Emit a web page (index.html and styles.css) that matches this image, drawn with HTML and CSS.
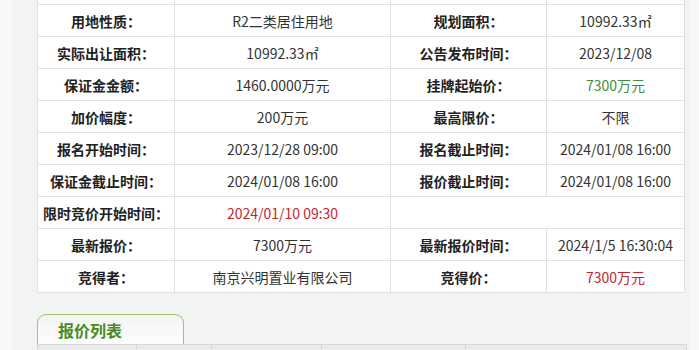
FILE: index.html
```html
<!DOCTYPE html>
<html lang="zh-CN">
<head>
<meta charset="utf-8">
<title>地块详情</title>
<link rel="stylesheet" href="styles.css">
</head>
<body>
<div class="page">
  <table class="info">
    <colgroup>
      <col class="c1"><col class="c2"><col class="c3"><col class="c4">
    </colgroup>
    <tbody>
      <tr class="cut"><th></th><td></td><th></th><td></td></tr>
      <tr><th>用地性质：</th><td>R2二类居住用地</td><th>规划面积：</th><td>10992.33㎡</td></tr>
      <tr><th>实际出让面积：</th><td>10992.33㎡</td><th>公告发布时间：</th><td>2023/12/08</td></tr>
      <tr><th>保证金金额：</th><td>1460.0000万元</td><th>挂牌起始价：</th><td class="green">7300万元</td></tr>
      <tr><th>加价幅度：</th><td>200万元</td><th>最高限价：</th><td>不限</td></tr>
      <tr><th>报名开始时间：</th><td>2023/12/28 09:00</td><th>报名截止时间：</th><td>2024/01/08 16:00</td></tr>
      <tr><th>保证金截止时间：</th><td>2024/01/08 16:00</td><th>报价截止时间：</th><td>2024/01/08 16:00</td></tr>
      <tr><th>限时竞价开始时间：</th><td class="red">2024/01/10 09:30</td><td colspan="2"></td></tr>
      <tr><th>最新报价：</th><td>7300万元</td><th>最新报价时间：</th><td>2024/1/5 16:30:04</td></tr>
      <tr><th>竞得者：</th><td>南京兴明置业有限公司</td><th>竞得价：</th><td class="red">7300万元</td></tr>
    </tbody>
  </table>

  <div class="tabbar">
    <div class="tab">报价列表</div>
  </div>

  <table class="bids">
    <colgroup>
      <col class="b1"><col class="b2"><col class="b3"><col class="b4"><col class="b5">
    </colgroup>
    <thead>
      <tr><th></th><th></th><th></th><th></th><th></th></tr>
    </thead>
  </table>
</div>
</body>
</html>
```

FILE: styles.css
```css
html, body {
  margin: 0;
  padding: 0;
  background: #f8f8f8;
  height: 100%;
  overflow: hidden;
}

body {
  font-family: "Noto Sans CJK SC", "Microsoft YaHei", sans-serif;
  font-size: 14px;
  color: #333;
}

.page {
  margin: 0 9px 0 12px;
  padding: 0 7px 0 25px;
  background: #f2f3f3;
  min-height: 100%;
}

.info {
  border-collapse: collapse;
  table-layout: fixed;
  width: 647px;
  margin-top: -28px;
  background: #fff;
}

.info .c1 { width: 137px; }
.info .c2 { width: 216px; }
.info .c3 { width: 156px; }
.info .c4 { width: 138px; }

.info th,
.info td {
  border: 1px solid #e1e1e1;
  height: 31px;
  padding: 0;
  text-align: center;
  vertical-align: middle;
  white-space: nowrap;
  line-height: 20px;
}

.info th {
  font-weight: bold;
  color: #222;
}

.info td {
  color: #333;
}

.info .green { color: #3f8d3a; }
.info .red { color: #c1272d; }

.tabbar {
  display: flex;
  margin-top: 21px;
}

.tab {
  width: 125px;
  height: 29px;
  padding-left: 20px;
  border: 1px solid #9dc572;
  border-bottom: none;
  border-radius: 9px 9px 0 0;
  background: linear-gradient(#f2f3f2, #fdfdfd);
  color: #4a8b1d;
  font-size: 16px;
  font-weight: bold;
  line-height: 30px;
}

.bids {
  border-collapse: collapse;
  table-layout: fixed;
  width: 649px;
  background: #e9eaea;
}

.bids .b1 { width: 99px; }
.bids .b2 { width: 75px; }
.bids .b3 { width: 110px; }
.bids .b4 { width: 144px; }
.bids .b5 { width: 221px; }

.bids th {
  border: 1px solid #d7d8d8;
  height: 32px;
  padding: 0;
}
```
